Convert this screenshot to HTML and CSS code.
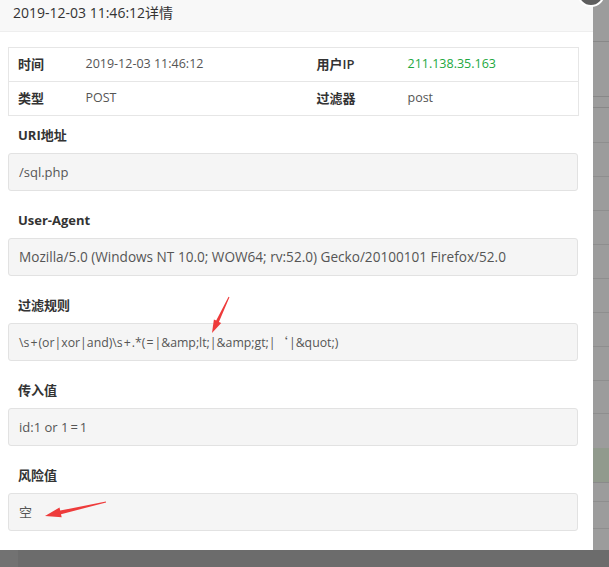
FILE: index.html
```html
<!DOCTYPE html>
<html lang="zh-CN">
<head>
<meta charset="utf-8">
<title>详情</title>
<link rel="stylesheet" href="styles.css">
</head>
<body>
<div class="stage">
  <div class="modal">
    <div class="modal-title">2019-12-03 11:46:12详情</div>
    <div class="modal-body">
      <table class="info">
        <colgroup><col class="c1"><col class="c2"><col class="c3"><col class="c4"></colgroup>
        <tr><th>时间</th><td>2019-12-03 11:46:12</td><th>用户IP</th><td class="ip">211.138.35.163</td></tr>
        <tr><th>类型</th><td>POST</td><th>过滤器</th><td>post</td></tr>
      </table>
      <div class="field"><div class="label">URI地址</div><div class="box">/sql.php</div></div>
      <div class="field"><div class="label">User-Agent</div><div class="box wide">Mozilla/5.0 (Windows NT 10.0; WOW64; rv:52.0) Gecko/20100101 Firefox/52.0</div></div>
      <div class="field"><div class="label">过滤规则</div><div class="box rule">\s<span class="op">+</span>(or|xor|and)\s<span class="op">+</span>.*(<span class="op">=</span>|&amp;amp;lt;|&amp;amp;gt;|<span class="cjk">‘</span>|&amp;quot;)</div></div>
      <div class="field"><div class="label">传入值</div><div class="box">id:1 or 1<span class="op wide-op">=</span>1</div></div>
      <div class="field"><div class="label">风险值</div><div class="box">空</div></div>
    </div>
    <span class="close-btn"></span>
    <svg class="marks" width="593" height="550" viewBox="0 0 593 550">
      <polygon fill="#ee3b3b" points="229.45,297.2 218.9,321.9 221.2,323 212,333 213.9,319.5 216.2,320.6 228.55,296.8"/>
      <polygon fill="#ee3b3b" points="106.1,502.5 61,514.2 61.7,517.3 45,516 59.5,507.5 60.2,510.6 105.9,501.5"/>
    </svg>
  </div>
  <div class="shade-right"></div>
  <div class="shade-bottom"><span class="shade-left"></span></div>
</div>
</body>
</html>
```
FILE: styles.css
```css
html, body {
  margin: 0;
  padding: 0;
}
body {
  width: 609px;
  height: 567px;
  overflow: hidden;
  background: #6c6c6c;
  font-family: "Open Sans", "Noto Sans CJK SC", sans-serif;
  color: #555;
}
.stage {
  display: grid;
  grid-template-columns: 593px 16px;
  grid-template-rows: 550px 17px;
}
.modal {
  position: relative;
  background: #fff;
  z-index: 2;
}
.modal-title {
  height: 31px;
  line-height: 25px;
  padding-left: 13px;
  background: #f8f8f8;
  border-bottom: 1px solid #eee;
  font-size: 14px;
  color: #333;
}
.modal-body {
  padding: 15px 15px 20px 8px;
}
.info {
  width: 570px;
  border-collapse: collapse;
  table-layout: fixed;
  font-size: 12.5px;
  line-height: 16px;
}
.info .c1 { width: 68px; }
.info .c2 { width: 231px; }
.info .c3 { width: 91px; }
.info .c4 { width: 180px; }
.info th, .info td {
  height: 31px;
  padding: 0 10px 2px 9px;
  border: 1px solid #e6e6e6;
  border-left: none;
  border-right: none;
  text-align: left;
  font-weight: normal;
}
.info tr th:first-child { border-left: 1px solid #e6e6e6; }
.info tr td:last-child { border-right: 1px solid #e6e6e6; }
.info th {
  color: #333;
  font-weight: 600;
  font-size: 13px;
}
.info td { color: #555; }
.info td.ip { color: #22a83e; }
.field {
  margin-top: 19px;
}
.field:first-of-type {
  margin-top: 9px;
}
.label {
  line-height: 20px;
  padding-left: 10px;
  font-size: 13px;
  font-weight: 700;
  color: #333;
  margin-bottom: 8px;
}
.box {
  height: 36px;
  line-height: 36px;
  padding: 0 10px;
  background: #f5f5f5;
  border: 1px solid #e2e2e2;
  border-radius: 3px;
  font-size: 13px;
  color: #555;
  white-space: nowrap;
  overflow: hidden;
}
.box.wide {
  font-size: 13.6px;
}
.box.rule {
  font-size: 12.3px;
}
.op {
  margin: 0 1px;
}
.op.wide-op {
  margin: 0 2px;
}
.cjk {
  font-family: "Noto Sans CJK SC", sans-serif;
  padding-right: 1px;
}
.close-btn {
  position: absolute;
  left: 577px;
  top: -21px;
  width: 24px;
  height: 24px;
  border-radius: 50%;
  background: #5f5f5f;
  border: 2px solid #fff;
}
.marks {
  position: absolute;
  left: 0;
  top: 0;
  pointer-events: none;
}
.shade-right {
  background-color: #9c9c9c;
  background-image:
    linear-gradient(to bottom,
      transparent 41px, #888 41px, #888 42px, transparent 42px,
      transparent 96px, #888 96px, #888 97px, transparent 97px,
      transparent 107px, #888 107px, #888 108px, transparent 108px,
      transparent 142px, #8e8e8e 142px, #8e8e8e 143px, transparent 143px,
      transparent 176px, #8e8e8e 176px, #8e8e8e 177px, transparent 177px,
      transparent 210px, #8e8e8e 210px, #8e8e8e 211px, transparent 211px,
      transparent 244px, #8e8e8e 244px, #8e8e8e 245px, transparent 245px,
      transparent 278px, #8e8e8e 278px, #8e8e8e 279px, transparent 279px,
      transparent 312px, #8e8e8e 312px, #8e8e8e 313px, transparent 313px,
      transparent 346px, #8e8e8e 346px, #8e8e8e 347px, transparent 347px,
      transparent 380px, #8e8e8e 380px, #8e8e8e 381px, transparent 381px,
      transparent 413px, #8e8e8e 413px, #8e8e8e 414px, transparent 414px,
      transparent 448px, #919a8d 448px, #919a8d 482px, #8a8a8a 482px, #8a8a8a 483px, transparent 483px,
      transparent 501px, #8e8e8e 501px, #8e8e8e 502px, transparent 502px,
      transparent 528px, #8e8e8e 528px, #8e8e8e 529px, transparent 529px);
}
.shade-bottom {
  grid-column: 1 / 3;
  background: #6c6c6c;
  display: flex;
}
.shade-left {
  width: 18px;
  background: #727272;
}
```
